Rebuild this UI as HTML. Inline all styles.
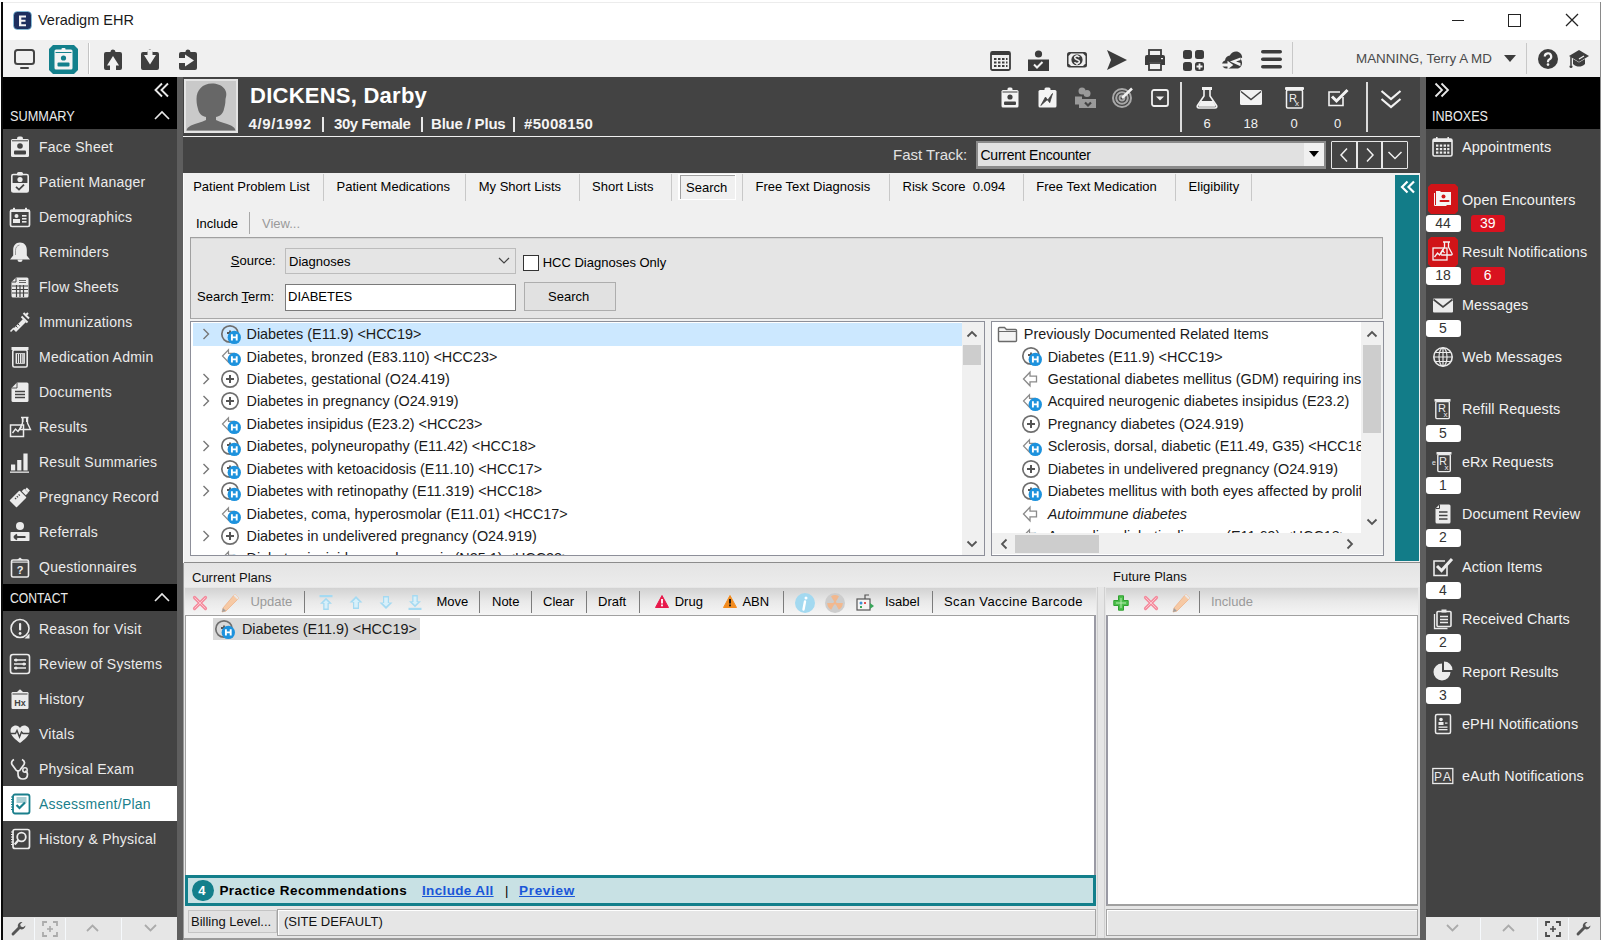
<!DOCTYPE html>
<html><head><meta charset="utf-8">
<style>
*{margin:0;padding:0;box-sizing:border-box}
html,body{width:1602px;height:940px;overflow:hidden;background:#fff;font-family:"Liberation Sans",sans-serif;color:#000}
.a{position:absolute}
.t{position:absolute;white-space:nowrap;line-height:1}
svg{position:absolute;overflow:visible}
/* sidebar */
.si{position:absolute;left:39px;font-size:14px;letter-spacing:0.25px;margin-top:-0.8px;color:#f2f2f2;white-space:nowrap;line-height:1}
.ri{position:absolute;left:1462px;font-size:14px;color:#f2f2f2;white-space:nowrap;line-height:1}
.bd{position:absolute;height:17px;background:#fff;border-radius:3px;color:#333;font-size:13px;text-align:center;line-height:17px}
.bdr{position:absolute;height:17px;background:#d9121f;border-radius:3px;color:#fff;font-size:13px;text-align:center;line-height:17px}
.tab{position:absolute;top:179px;font-size:13px;color:#000;white-space:nowrap;line-height:1}
.tsep{position:absolute;top:174px;width:1px;height:27px;background:#c8c8c8}
.row{position:absolute;font-size:14px;color:#1a1a1a;white-space:nowrap;line-height:1}
.tb{position:absolute;font-size:13px;color:#000;white-space:nowrap;line-height:1}
.tsp{position:absolute;top:590px;width:2px;height:24px;border-left:1px solid #b4b4b4;border-right:1px solid #fafafa}
</style></head><body>
<!-- window frame -->
<div class="a" style="left:0;top:0;width:1602px;height:40px;background:#fff"></div>
<div class="a" style="left:0;top:40px;width:1602px;height:37px;background:#f0f0f0"></div>



<!-- left sidebar -->
<div class="a" style="left:2px;top:77px;width:175px;height:863px;background:#434343"></div>
<div class="a" style="left:2px;top:77px;width:175px;height:52px;background:#000"></div>
<div class="a" style="left:177px;top:77px;width:6px;height:863px;background:#5e5e5e"></div>

<!-- main header -->
<div class="a" style="left:183px;top:77px;width:1237px;height:96px;background:#434343"></div>
<div class="a" style="left:183px;top:136px;width:1237px;height:1px;background:#f0f0f0"></div>
<!-- main content bg -->
<div class="a" style="left:183px;top:173px;width:1237px;height:767px;background:#f0f0f0"></div>

<!-- right gray stripe & sidebar -->
<div class="a" style="left:1420px;top:77px;width:6px;height:863px;background:#5e5e5e"></div>
<div class="a" style="left:1426px;top:77px;width:174px;height:863px;background:#434343"></div>
<div class="a" style="left:1426px;top:77px;width:174px;height:52px;background:#000"></div>


<!-- left sidebar content -->
<svg style="left:154px;top:82px" width="16" height="16" viewBox="0 0 16 16"><path d="M8 1.5L1.5 8 8 14.5M14 1.5L7.5 8 14 14.5" fill="none" stroke="#e8e8e8" stroke-width="1.9"/></svg>
<div class="t" style="left:9.7px;top:108.7px;font-size:14.8px;color:#ebebeb;transform:scaleX(0.86);transform-origin:0 0">SUMMARY</div>
<svg style="left:154px;top:110px" width="16" height="10" viewBox="0 0 16 10"><path d="M1 9L8 2l7 7" fill="none" stroke="#e8e8e8" stroke-width="1.6"/></svg>
<div class="a" style="left:2px;top:584px;width:175px;height:27px;background:#000"></div>
<div class="t" style="left:10px;top:590.7px;font-size:14.5px;color:#ebebeb;transform:scaleX(0.84);transform-origin:0 0">CONTACT</div>
<svg style="left:154px;top:592px" width="16" height="10" viewBox="0 0 16 10"><path d="M1 9L8 2l7 7" fill="none" stroke="#e8e8e8" stroke-width="1.6"/></svg>
<div class="a" style="left:2px;top:786px;width:175px;height:35px;background:#fff"></div>
<!-- bottom toolbar -->
<div class="a" style="left:2px;top:917px;width:175px;height:23px;background:#e6e6e6"></div>
<svg style="left:9px;top:136.4px" width="22" height="22" viewBox="0 0 22 22"><rect x="2" y="3" width="18" height="18" rx="1.5" fill="#ebebeb"/><rect x="8" y="0.5" width="6" height="4" rx="2" fill="#ebebeb"/><rect x="3" y="4.3" width="16" height="1" fill="#434343"/><circle cx="11" cy="10" r="2.8" fill="#434343"/><rect x="5" y="14.5" width="12" height="4" rx="1" fill="#434343"/></svg>
<div class="si" style="top:140.7px;color:#ebebeb">Face Sheet</div>
<svg style="left:9px;top:171.4px" width="22" height="22" viewBox="0 0 22 22"><rect x="2.8" y="3.5" width="16.4" height="17.5" rx="1.5" fill="none" stroke="#ebebeb" stroke-width="1.6"/><rect x="8" y="1" width="6" height="3.5" rx="1.5" fill="#ebebeb"/><circle cx="11" cy="8.5" r="2.6" fill="#ebebeb"/><rect x="2.8" y="12" width="16.4" height="9" fill="#ebebeb"/><path d="M7 15.8l3 2.8 5-5" fill="none" stroke="#434343" stroke-width="1.8"/></svg>
<div class="si" style="top:175.7px;color:#ebebeb">Patient Manager</div>
<svg style="left:9px;top:206.4px" width="22" height="22" viewBox="0 0 22 22"><rect x="1.5" y="4" width="19" height="16.5" rx="1.5" fill="none" stroke="#ebebeb" stroke-width="1.7"/><rect x="4" y="1.8" width="2" height="3" fill="#ebebeb"/><rect x="16" y="1.8" width="2" height="3" fill="#ebebeb"/><rect x="1.5" y="4" width="19" height="2" fill="#ebebeb"/><circle cx="7.5" cy="10" r="2" fill="#ebebeb"/><rect x="4" y="13" width="7" height="4" fill="#ebebeb"/><rect x="13" y="9" width="4.5" height="1.6" fill="#ebebeb"/><rect x="13" y="12" width="4.5" height="1.6" fill="#ebebeb"/><rect x="13" y="15" width="4.5" height="1.6" fill="#ebebeb"/></svg>
<div class="si" style="top:210.7px;color:#ebebeb">Demographics</div>
<svg style="left:9px;top:241.4px" width="22" height="22" viewBox="0 0 22 22"><path d="M11 1.5c-4.5 0-6.8 3.3-6.8 7.5v5.5L1 18.5h20l-3.2-4V9c0-4.2-2.3-7.5-6.8-7.5z" fill="#ebebeb"/><path d="M8.5 18.5a2.5 2.5 0 0 0 5 0z" fill="#ebebeb"/><path d="M6.5 14V9.5c0-3 1.5-5 4-5.5" fill="none" stroke="#434343" stroke-width="0.8" opacity="0.6"/></svg>
<div class="si" style="top:245.7px;color:#ebebeb">Reminders</div>
<svg style="left:9px;top:276.4px" width="22" height="22" viewBox="0 0 22 22"><path d="M7 1.5h11a1.5 1.5 0 0 1 1.5 1.5v17a1.5 1.5 0 0 1-1.5 1.5H4a1.5 1.5 0 0 1-1.5-1.5V6z" fill="#ebebeb"/><path d="M3 10h16M3 13.5h16M3 17h16M7.5 9v12M11 9v12M14.5 9v12" stroke="#434343" stroke-width="1.2"/><path d="M7 1.5V6H2.5" stroke="#434343" stroke-width="1" fill="none"/><path d="M10 4.5h7M10 6.5h7" stroke="#434343" stroke-width="0.8"/></svg>
<div class="si" style="top:280.7px;color:#ebebeb">Flow Sheets</div>
<svg style="left:9px;top:311.4px" width="22" height="22" viewBox="0 0 22 22"><path d="M1.5 20.5l3.5-3.5" stroke="#ebebeb" stroke-width="1.6"/><path d="M4 18l10-10 3 3L7 21z" fill="#ebebeb"/><path d="M12.5 5.5l6 6" stroke="#ebebeb" stroke-width="2"/><path d="M16 5l3-3M14.5 2l5.5 5.5" stroke="#ebebeb" stroke-width="2"/><path d="M7 15l1.5 1.5M9 13l1.5 1.5" stroke="#434343" stroke-width="1"/></svg>
<div class="si" style="top:315.7px;color:#ebebeb">Immunizations</div>
<svg style="left:9px;top:346.4px" width="22" height="22" viewBox="0 0 22 22"><rect x="2.5" y="1" width="17" height="3" fill="#ebebeb"/><rect x="3.8" y="4" width="14.4" height="17" rx="1.5" fill="none" stroke="#ebebeb" stroke-width="1.6"/><path d="M7.5 8v9M9.5 8v9M11.5 8v9M13.2 8v9M14.8 8v9" stroke="#ebebeb" stroke-width="1.1"/><rect x="7" y="7.5" width="8.5" height="10" fill="none" stroke="#ebebeb" stroke-width="0.8"/></svg>
<div class="si" style="top:350.7px;color:#ebebeb">Medication Admin</div>
<svg style="left:9px;top:381.4px" width="22" height="22" viewBox="0 0 22 22"><path d="M8 1.5h10a1.5 1.5 0 0 1 1.5 1.5v16.5A1.5 1.5 0 0 1 18 21H4a1.5 1.5 0 0 1-1.5-1.5V7z" fill="#ebebeb"/><path d="M6 10.5h10M6 13.5h10M6 16.5h10" stroke="#434343" stroke-width="1.4"/><path d="M8 1.5V7H2.5" fill="none" stroke="#434343" stroke-width="0.9"/></svg>
<div class="si" style="top:385.7px;color:#ebebeb">Documents</div>
<svg style="left:9px;top:416.4px" width="22" height="22" viewBox="0 0 22 22"><rect x="1.5" y="9" width="13" height="11.5" fill="none" stroke="#ebebeb" stroke-width="1.5"/><path d="M3.5 17l3-4 2.5 2.5 3.5-5" fill="none" stroke="#ebebeb" stroke-width="1.4"/><path d="M12 1.5h7.5M13.5 1.5v5.5L10.5 13.5h11L18.5 7V1.5" fill="none" stroke="#ebebeb" stroke-width="1.4"/><path d="M14 2v4M17.5 2v4" stroke="#ebebeb" stroke-width="1"/></svg>
<div class="si" style="top:420.7px;color:#ebebeb">Results</div>
<svg style="left:9px;top:451.4px" width="22" height="22" viewBox="0 0 22 22"><rect x="2" y="13.5" width="4.2" height="6" fill="#ebebeb"/><rect x="8.2" y="9" width="4.2" height="10.5" fill="#ebebeb"/><rect x="14.4" y="2.5" width="4.2" height="17" fill="#ebebeb"/><rect x="1" y="20.5" width="19" height="1.3" fill="#ebebeb"/></svg>
<div class="si" style="top:455.7px;color:#ebebeb">Result Summaries</div>
<svg style="left:9px;top:486.4px" width="22" height="22" viewBox="0 0 22 22"><path d="M1.5 14.5l9-9 6 6-9 9z" fill="#ebebeb" stroke="#ebebeb" stroke-width="1.5" stroke-linejoin="round"/><path d="M14 4l4 4" stroke="#ebebeb" stroke-width="3.5"/><path d="M17 2.5l3 3" stroke="#ebebeb" stroke-width="2.5"/><path d="M6 12l1.2 1.2M7.8 10.2l1.2 1.2M9.6 8.4l1.2 1.2" stroke="#434343" stroke-width="1.2"/></svg>
<div class="si" style="top:490.7px;color:#ebebeb">Pregnancy Record</div>
<svg style="left:9px;top:521.4px" width="22" height="22" viewBox="0 0 22 22"><circle cx="11" cy="5" r="4" fill="#ebebeb"/><rect x="1.5" y="11" width="19" height="9" rx="0.8" fill="#ebebeb"/><path d="M5 16h11.5M5 16l3-2.5M5 16l3 2.5" stroke="#434343" stroke-width="1.8" fill="none"/></svg>
<div class="si" style="top:525.7px;color:#ebebeb">Referrals</div>
<svg style="left:9px;top:556.4px" width="22" height="22" viewBox="0 0 22 22"><rect x="2.5" y="4" width="17" height="17" rx="1.5" fill="none" stroke="#ebebeb" stroke-width="1.6"/><path d="M8 4l3-2.5L14 4z" fill="#ebebeb"/><rect x="2.5" y="5.5" width="17" height="1.2" fill="#ebebeb"/><text x="11" y="18" font-size="11" font-weight="bold" text-anchor="middle" fill="#ebebeb" font-family="Liberation Sans">?</text></svg>
<div class="si" style="top:560.7px;color:#ebebeb">Questionnaires</div>
<svg style="left:9px;top:618.0px" width="22" height="22" viewBox="0 0 22 22"><circle cx="11" cy="10.5" r="9" fill="none" stroke="#ebebeb" stroke-width="1.6"/><rect x="10" y="5" width="2.2" height="7.5" rx="1" fill="#ebebeb"/><circle cx="11.1" cy="15.5" r="1.4" fill="#ebebeb"/><path d="M15.5 20.5h5v-5z" fill="#ebebeb"/></svg>
<div class="si" style="top:622.3px;color:#ebebeb">Reason for Visit</div>
<svg style="left:9px;top:653.0px" width="22" height="22" viewBox="0 0 22 22"><rect x="1.5" y="1.5" width="19" height="19" rx="2.5" fill="none" stroke="#ebebeb" stroke-width="1.6"/><path d="M5 7h12M5 11h12M5 15h12" stroke="#ebebeb" stroke-width="1.4"/><circle cx="7" cy="7" r="1.6" fill="#ebebeb"/><circle cx="15" cy="11" r="1.6" fill="#ebebeb"/><circle cx="7" cy="15" r="1.6" fill="#ebebeb"/></svg>
<div class="si" style="top:657.3px;color:#ebebeb">Review of Systems</div>
<svg style="left:9px;top:688.0px" width="22" height="22" viewBox="0 0 22 22"><rect x="2.5" y="4" width="17" height="17" rx="1.2" fill="#ebebeb"/><path d="M8 4l3-2.8L14 4z" fill="#ebebeb"/><rect x="3.5" y="5.5" width="15" height="1" fill="#434343"/><text x="11" y="17.5" font-size="9" font-weight="bold" text-anchor="middle" fill="#434343" font-family="Liberation Sans">Hx</text></svg>
<div class="si" style="top:692.3px;color:#ebebeb">History</div>
<svg style="left:9px;top:723.0px" width="22" height="22" viewBox="0 0 22 22"><path d="M11 20C6.5 16.5 1.5 13 1.5 8 1.5 4.8 3.8 2.5 6.8 2.5c2 0 3.3 1 4.2 2.5.9-1.5 2.2-2.5 4.2-2.5 3 0 5.3 2.3 5.3 5.5 0 5-5 8.5-9.5 12z" fill="#ebebeb"/><path d="M1 10.5h5.5l1.5-3 2.5 6.5 2-5 1.5 1.5H21" stroke="#434343" stroke-width="1.4" fill="none"/></svg>
<div class="si" style="top:727.3px;color:#ebebeb">Vitals</div>
<svg style="left:9px;top:758.0px" width="22" height="22" viewBox="0 0 22 22"><path d="M5 1.5c-2 1-3 3-2 5l4 5.5c1 1.2 3 1.2 4 0l4-5.5c1-2 0-4-2-5" fill="none" stroke="#ebebeb" stroke-width="1.7"/><path d="M9 12.5v3.5c0 3 2 5 5 5s4.5-2 4.5-4.5c0-2-1-3-2.5-3.5" fill="none" stroke="#ebebeb" stroke-width="1.7"/><circle cx="16" cy="12" r="2.2" fill="none" stroke="#ebebeb" stroke-width="1.5"/></svg>
<div class="si" style="top:762.3px;color:#ebebeb">Physical Exam</div>
<svg style="left:9px;top:793.0px" width="22" height="22" viewBox="0 0 22 22"><rect x="4" y="1.5" width="16.5" height="19" rx="2" fill="none" stroke="#1a7f8c" stroke-width="1.8"/><path d="M7.5 5h10M7.5 7h10M7.5 9h10" stroke="#1a7f8c" stroke-width="1.2" opacity="0.75"/><path d="M7.5 12l3 3 5.5-5.5" fill="none" stroke="#1a7f8c" stroke-width="2.2"/><path d="M2 4h2.5M2 6.5h2.5M2 9h2.5M2 11.5h2.5M2 14h2.5M2 16.5h2.5" stroke="#1a7f8c" stroke-width="1"/></svg>
<div class="si" style="top:797.3px;color:#1a7f8c">Assessment/Plan</div>
<svg style="left:9px;top:828.0px" width="22" height="22" viewBox="0 0 22 22"><rect x="4" y="1.5" width="16.5" height="19" rx="2" fill="none" stroke="#ebebeb" stroke-width="1.7"/><circle cx="12.5" cy="9" r="4.3" fill="none" stroke="#ebebeb" stroke-width="1.8"/><path d="M9.5 12l-3.8 4.5" stroke="#ebebeb" stroke-width="2.2"/><path d="M2 4h2.5M2 6.5h2.5M2 9h2.5M2 11.5h2.5M2 14h2.5M2 16.5h2.5" stroke="#ebebeb" stroke-width="1"/></svg>
<div class="si" style="top:832.3px;color:#ebebeb">History &amp; Physical</div>

<!-- title bar -->
<svg style="left:13px;top:11px" width="19" height="19" viewBox="0 0 19 19"><rect x="0.5" y="0.5" width="18" height="18" rx="4" fill="#1d2f5e" stroke="#7fd3f0" stroke-width="0.6"/><path d="M6 4.5h7v2H8.3v2.3h4.2v2H8.3v2.4H13v2H6z" fill="#f4f4f4"/></svg>
<div class="t" style="left:38px;top:13px;font-size:14.5px;color:#1a1a1a">Veradigm EHR</div>
<div class="a" style="left:1452px;top:20px;width:12px;height:1px;background:#222"></div>
<div class="a" style="left:1508px;top:14px;width:13px;height:13px;border:1.3px solid #222"></div>
<svg style="left:1565px;top:13px" width="14" height="14" viewBox="0 0 14 14"><path d="M1 1l12 12M13 1L1 13" stroke="#222" stroke-width="1.3"/></svg>
<!-- toolbar -->
<svg style="left:14px;top:49px" width="21" height="22" viewBox="0 0 21 22"><rect x="1" y="1" width="19" height="14" rx="2.5" fill="none" stroke="#444" stroke-width="2"/><rect x="6" y="18" width="9" height="2" rx="1" fill="#444"/></svg>
<svg style="left:49px;top:45px" width="29" height="29" viewBox="0 0 29 29"><path d="M4 0h21l4 4v21l-4 4H4l-4-4V4z" fill="#13808c"/><rect x="5.5" y="4.5" width="18" height="20" rx="1.5" fill="#f4f4f4"/><rect x="12.5" y="3" width="4" height="3" rx="1" fill="#f4f4f4"/><rect x="6.5" y="7" width="16" height="1" fill="#13808c"/><circle cx="14.5" cy="13" r="2.6" fill="#13808c"/><rect x="8.5" y="17.5" width="12" height="4" rx="1" fill="#13808c"/></svg>
<div class="a" style="left:88px;top:43px;width:1px;height:31px;background:#c4c4c4"></div>
<div class="a" style="left:89px;top:43px;width:1px;height:31px;background:#fff"></div>
<svg style="left:104px;top:49px" width="18" height="22" viewBox="0 0 18 22"><path d="M2 3h4.5a2.5 2.5 0 0 1 5 0H16a2 2 0 0 1 2 2v14a2 2 0 0 1-2 2H2a2 2 0 0 1-2-2V5a2 2 0 0 1 2-2z" fill="#3f3f3f"/><path d="M9 7l-6 9.5h3V21h6v-4.5h3z" fill="#f2f2f2"/></svg>
<svg style="left:141px;top:49px" width="18" height="22" viewBox="0 0 18 22"><path d="M2 3h4.5a2.5 2.5 0 0 1 5 0H16a2 2 0 0 1 2 2v14a2 2 0 0 1-2 2H2a2 2 0 0 1-2-2V5a2 2 0 0 1 2-2z" fill="#3f3f3f"/><path d="M6.5 1v5H3l6 9.5 6-9.5h-3.5V1z" fill="#f2f2f2"/></svg>
<svg style="left:179px;top:49px" width="18" height="22" viewBox="0 0 18 22"><path d="M2 3h4.5a2.5 2.5 0 0 1 5 0H16a2 2 0 0 1 2 2v14a2 2 0 0 1-2 2H2a2 2 0 0 1-2-2V5a2 2 0 0 1 2-2z" fill="#3f3f3f"/><path d="M0 9h6V5.5l9 6-9 6V14H0z" fill="#f2f2f2"/></svg>
<!-- toolbar right icons -->
<svg style="left:990px;top:50px" width="21" height="21" viewBox="0 0 21 21"><rect x="1" y="2" width="19" height="18" rx="1.5" fill="none" stroke="#3c3c3c" stroke-width="1.8"/><rect x="1" y="2" width="19" height="3" fill="#3c3c3c"/><g fill="#3c3c3c"><rect x="4" y="8" width="2.5" height="2"/><rect x="8" y="8" width="2.5" height="2"/><rect x="12" y="8" width="2.5" height="2"/><rect x="16" y="8" width="1.5" height="2"/><rect x="4" y="11.5" width="2.5" height="2"/><rect x="8" y="11.5" width="2.5" height="2"/><rect x="12" y="11.5" width="2.5" height="2"/><rect x="16" y="11.5" width="1.5" height="2"/><rect x="4" y="15" width="2.5" height="2"/><rect x="8" y="15" width="2.5" height="2"/><rect x="12" y="15" width="2.5" height="2"/><rect x="16" y="15" width="1.5" height="2"/></g></svg>
<svg style="left:1028px;top:50px" width="21" height="21" viewBox="0 0 21 21"><circle cx="10.5" cy="4" r="3.6" fill="#3c3c3c"/><rect x="0" y="9.5" width="21" height="11.5" fill="#3c3c3c"/><path d="M6 14.5l3 3 5.5-5.5" fill="none" stroke="#f2f2f2" stroke-width="2"/></svg>
<svg style="left:1067px;top:52px" width="20" height="16" viewBox="0 0 20 16"><rect x="0" y="0" width="20" height="15.5" rx="2.5" fill="#3c3c3c"/><path d="M4 1.5h12l2.5 2.5v7.5L16 14H4l-2.5-2.5V4z" fill="#f0f0f0"/><circle cx="10" cy="7.75" r="5.6" fill="#3c3c3c"/><path d="M12.3 5.2c-.5-.8-1.3-1.2-2.3-1.2-1.4 0-2.3.7-2.3 1.8 0 2.4 4.7 1.4 4.7 3.8 0 1.1-1 1.9-2.4 1.9-1.1 0-2-.5-2.5-1.3M10 2.8v1.3M10 11.5v1.4" fill="none" stroke="#f0f0f0" stroke-width="1.5"/></svg>
<svg style="left:1107px;top:50px" width="20" height="20" viewBox="0 0 20 20"><path d="M0 0l20 10L0 20l4-10z" fill="#3c3c3c"/></svg>
<svg style="left:1145px;top:50px" width="20" height="21" viewBox="0 0 20 21"><rect x="4" y="0" width="12" height="6" fill="none" stroke="#3c3c3c" stroke-width="1.8"/><path d="M2 5h16a2 2 0 0 1 2 2v8h-4v-3H4v3H0V7a2 2 0 0 1 2-2z" fill="#3c3c3c"/><rect x="4" y="13" width="12" height="7" fill="none" stroke="#3c3c3c" stroke-width="1.8"/><rect x="16" y="8" width="2" height="1.2" fill="#f2f2f2"/></svg>
<svg style="left:1183px;top:50px" width="21" height="21" viewBox="0 0 21 21"><rect x="0" y="0" width="9" height="9" rx="2.5" fill="#3c3c3c"/><rect x="12" y="0" width="9" height="9" rx="2.5" fill="#3c3c3c"/><rect x="0" y="12" width="9" height="9" rx="2.5" fill="#3c3c3c"/><rect x="12" y="12" width="9" height="9" rx="2.5" fill="#3c3c3c"/><path d="M16.5 13.5v6M13.5 16.5h6" stroke="#f2f2f2" stroke-width="1.8"/></svg>
<svg style="left:1222px;top:51px" width="21" height="19" viewBox="0 0 21 19"><path d="M4.5 17.5C2 17.5 0 15.8 0 13.5c0-2 1.3-3.4 3-3.9C3.3 6.8 5.3 4.8 7.8 4.6 9.2 2 11.5.5 14 .5c3.3 0 6 2.6 6.2 5.8-.1.5-.3.8-.8.8-.3 0-.6-.2-.7-.6C18 7.6 19.8 9 20 11.5c.3 3.3-2 6-5 6z" fill="#3c3c3c"/><path d="M0 12.5h5.5v-2.7l5.8 4.3-5.8 4.3v-2.9H0z" fill="#f2f2f2"/><path d="M18.5 6.5L8 10.5l10.5 4.8v-3.2L14 10.5l4.5-1.6z" fill="#f2f2f2"/></svg>
<svg style="left:1261px;top:50px" width="21" height="19" viewBox="0 0 21 19"><rect x="0" y="0" width="21" height="3.6" rx="1.8" fill="#3c3c3c"/><rect x="0" y="7.5" width="21" height="3.6" rx="1.8" fill="#3c3c3c"/><rect x="0" y="15" width="21" height="3.6" rx="1.8" fill="#3c3c3c"/></svg>
<div class="a" style="left:1292px;top:42px;width:1px;height:32px;background:#c8c8c8"></div>
<div class="t" style="left:1356px;top:52px;font-size:13.4px;color:#4a4a4a">MANNING, Terry A MD</div>
<svg style="left:1504px;top:55px" width="12" height="7" viewBox="0 0 12 7"><path d="M0 0h12L6 7z" fill="#3c3c3c"/></svg>
<div class="a" style="left:1526px;top:43px;width:1px;height:31px;background:#c8c8c8"></div>
<svg style="left:1538px;top:49px" width="20" height="20" viewBox="0 0 20 20"><circle cx="10" cy="10" r="10" fill="#3c3c3c"/><path d="M6.8 7.5a3.2 3.2 0 1 1 4.5 2.9c-.9.5-1.3 1-1.3 2v.8" fill="none" stroke="#f2f2f2" stroke-width="2.2"/><circle cx="10" cy="15.6" r="1.3" fill="#f2f2f2"/></svg>
<svg style="left:1569px;top:49px" width="20" height="20" viewBox="0 0 20 20"><path d="M10 1l10 6-10 6L0 7z" fill="#3c3c3c"/><path d="M4 10v5c2 2 4 2.5 6 2.5s4-.5 6-2.5v-5l-6 3.5z" fill="#3c3c3c"/><path d="M2 8v8" stroke="#3c3c3c" stroke-width="1.5"/><circle cx="2" cy="17.5" r="1.5" fill="#3c3c3c"/><path d="M10 10l5-3" stroke="#f2f2f2" stroke-width="1.2"/></svg>

<!-- patient header -->
<div class="a" style="left:184px;top:79px;width:54px;height:54px;background:#e4e4e4"></div>
<svg style="left:186px;top:81px" width="50" height="50" viewBox="0 0 50 50"><rect width="50" height="50" fill="#c9c9c9"/><path d="M26 2.5C16.5 2.5 10.5 9 10.5 18c0 5 1 8 1.5 10 .5 3 2 5 4 6.5 1.5 1 3 1 4 1.5v3c-4 2-10 3.5-15 5.5-3 1.5-4 3-4.5 5h49c-.5-2-1.5-3.5-4.5-5-5-2-11-3.5-15-5.5v-3c1-.5 2.5-.5 4-1.5 2-1.5 3.5-3.5 4-6.5.5-2 1.5-5 1.5-10C43 9 36 2.5 26 2.5z" fill="#676767"/></svg>
<div class="t" style="left:250px;top:84.5px;font-size:22px;font-weight:bold;color:#fff;letter-spacing:0.25px">DICKENS, Darby</div>
<div class="t" style="left:248.5px;top:115.5px;font-size:15px;font-weight:bold;color:#f4f4f4;letter-spacing:0.6px">4/9/1992</div>
<div class="a" style="left:322px;top:117px;width:1.5px;height:15px;background:#e8e8e8"></div>
<div class="t" style="left:334px;top:115.5px;font-size:15px;font-weight:bold;color:#f4f4f4;letter-spacing:-0.45px">30y Female</div>
<div class="a" style="left:421px;top:117px;width:1.5px;height:15px;background:#e8e8e8"></div>
<div class="t" style="left:431px;top:115.5px;font-size:15px;font-weight:bold;color:#f4f4f4;letter-spacing:-0.2px">Blue / Plus</div>
<div class="a" style="left:513px;top:117px;width:1.5px;height:15px;background:#e8e8e8"></div>
<div class="t" style="left:524px;top:115.5px;font-size:15px;font-weight:bold;color:#f4f4f4;letter-spacing:0.3px">#5008150</div>
<!-- header icons -->
<svg style="left:1001px;top:87px" width="18" height="21" viewBox="0 0 18 21"><rect x="0.5" y="3" width="17" height="17.5" rx="1.5" fill="#f4f4f4"/><rect x="6.5" y="0.5" width="5" height="4" rx="1.5" fill="#f4f4f4"/><rect x="1.5" y="4.5" width="15" height="1" fill="#434343"/><circle cx="9" cy="10" r="2.6" fill="#434343"/><rect x="3" y="14.5" width="12" height="3.5" rx="1" fill="#434343"/></svg>
<svg style="left:1038px;top:87px" width="19" height="21" viewBox="0 0 19 21"><rect x="0.5" y="3" width="18" height="17.5" rx="1.5" fill="#f4f4f4"/><rect x="6.5" y="0.5" width="6" height="4" rx="1.5" fill="#f4f4f4"/><path d="M2.8 18.5L7.5 10l2.2 3.2L14.5 6.5l-2.8 9.2-2.3-3.2z" fill="#434343" stroke="#434343" stroke-width="0.8" stroke-linejoin="round"/></svg>
<svg style="left:1075px;top:87px" width="21" height="21" viewBox="0 0 21 21"><circle cx="7" cy="4" r="3.5" fill="#9a9a9a"/><circle cx="12" cy="6.5" r="3.5" fill="#9a9a9a"/><rect x="0" y="9.5" width="7" height="8" fill="#9a9a9a"/><rect x="4" y="12" width="17" height="9" fill="#9a9a9a"/><path d="M10 15.5l3 3 3-3" stroke="#434343" stroke-width="2.2" fill="none"/></svg>
<svg style="left:1112px;top:87px" width="22" height="21" viewBox="0 0 22 21"><circle cx="10" cy="11" r="9" fill="none" stroke="#a8a8a8" stroke-width="2"/><circle cx="10" cy="11" r="5.8" fill="none" stroke="#a8a8a8" stroke-width="2"/><circle cx="10" cy="11" r="2.5" fill="none" stroke="#a8a8a8" stroke-width="1.8"/><path d="M10 11L20 1.5" stroke="#f0f0f0" stroke-width="2.6"/></svg>
<svg style="left:1151px;top:89px" width="18" height="18" viewBox="0 0 18 18"><rect x="1" y="1" width="16" height="16" rx="2" fill="none" stroke="#f0f0f0" stroke-width="1.8"/><path d="M5 7.5h8L9 11.5z" fill="#f0f0f0"/></svg>
<div class="a" style="left:1180px;top:82px;width:2px;height:50px;background:#dcdcdc"></div>
<svg style="left:1196px;top:87px" width="22" height="22" viewBox="0 0 22 22"><rect x="6" y="0" width="10" height="3" fill="#f2f2f2"/><path d="M8 3v6L1.5 18.5c-.8 1.3 0 2.5 1.5 2.5h16c1.5 0 2.3-1.2 1.5-2.5L14 9V3" fill="none" stroke="#f2f2f2" stroke-width="1.6"/><path d="M5 14h12l2.5 4.5c.3.8 0 1.3-.8 1.3H3.3c-.8 0-1.1-.5-.8-1.3z" fill="#f2f2f2"/></svg>
<svg style="left:1240px;top:90px" width="22" height="15" viewBox="0 0 22 15"><rect x="0" y="0" width="22" height="15" rx="1.5" fill="#f2f2f2"/><path d="M1 1.5l10 8 10-8" stroke="#434343" stroke-width="1.5" fill="none"/></svg>
<svg style="left:1285px;top:87px" width="19" height="22" viewBox="0 0 19 22"><rect x="0" y="0" width="19" height="3" rx="1" fill="#f2f2f2"/><rect x="1.5" y="3" width="16" height="18" rx="1.2" fill="none" stroke="#f2f2f2" stroke-width="1.5"/><text x="4" y="15" font-size="11" font-family="Liberation Sans" fill="#f2f2f2">R</text><text x="10" y="19" font-size="8" font-family="Liberation Sans" fill="#f2f2f2">x</text></svg>
<svg style="left:1328px;top:88px" width="21" height="19" viewBox="0 0 21 19"><path d="M15 9v8.5H1V4h11" fill="none" stroke="#f2f2f2" stroke-width="1.6"/><path d="M4 8.5l4.5 4.5L19.5 2" stroke="#f2f2f2" stroke-width="3" fill="none"/></svg>
<div class="t" style="left:1203.5px;top:117px;font-size:13px;color:#f2f2f2">6</div>
<div class="t" style="left:1243.5px;top:117px;font-size:13px;color:#f2f2f2">18</div>
<div class="t" style="left:1290.5px;top:117px;font-size:13px;color:#f2f2f2">0</div>
<div class="t" style="left:1334px;top:117px;font-size:13px;color:#f2f2f2">0</div>
<div class="a" style="left:1366px;top:82px;width:2px;height:50px;background:#dcdcdc"></div>
<svg style="left:1380px;top:89px" width="22" height="21" viewBox="0 0 22 21"><path d="M1.5 2l9.5 8 9.5-8M1.5 10l9.5 8 9.5-8" stroke="#f2f2f2" stroke-width="2.2" fill="none"/></svg>
<!-- fast track -->
<div class="t" style="left:893px;top:147.3px;font-size:15px;color:#e2e2e2">Fast Track:</div>
<div class="a" style="left:976px;top:141px;width:350px;height:28px;background:#8a8a8a"></div>
<div class="a" style="left:978px;top:143px;width:326px;height:23px;background:#e1e1e1"></div>
<div class="a" style="left:1304px;top:143px;width:20px;height:23px;background:#f0f0f0"></div>
<svg style="left:1309px;top:151px" width="10" height="6" viewBox="0 0 10 6"><path d="M0 0h10L5 6z" fill="#000"/></svg>
<div class="t" style="left:980.5px;top:148px;font-size:14px;color:#000;letter-spacing:-0.25px">Current Encounter</div>
<div class="a" style="left:1331px;top:141px;width:77px;height:28px;border:1.5px solid #e6e6e6;border-radius:1px"></div>
<div class="a" style="left:1356px;top:141px;width:2px;height:28px;background:#e6e6e6"></div>
<div class="a" style="left:1381px;top:141px;width:2px;height:28px;background:#e6e6e6"></div>
<svg style="left:1339px;top:147px" width="10" height="16" viewBox="0 0 10 16"><path d="M8 1.5L2 8l6 6.5" stroke="#f0f0f0" stroke-width="1.5" fill="none"/></svg>
<svg style="left:1365px;top:147px" width="10" height="16" viewBox="0 0 10 16"><path d="M2 1.5L8 8l-6 6.5" stroke="#f0f0f0" stroke-width="1.5" fill="none"/></svg>
<svg style="left:1387px;top:150px" width="16" height="10" viewBox="0 0 16 10"><path d="M1.5 2l6.5 6.5L14.5 2" stroke="#f0f0f0" stroke-width="1.5" fill="none"/></svg>

<!-- tabs -->
<div class="a" style="left:183px;top:173px;width:1px;height:767px;background:#fafafa"></div>
<div class="tab" style="left:193.2px;top:180px">Patient Problem List</div>
<div class="tab" style="left:336.5px;top:180px">Patient Medications</div>
<div class="tab" style="left:478.7px;top:180px">My Short Lists</div>
<div class="tab" style="left:592.0px;top:180px">Short Lists</div>
<div class="tab" style="left:686.0px;top:180px">Search</div>
<div class="tab" style="left:755.5px;top:180px">Free Text Diagnosis</div>
<div class="tab" style="left:902.6px;top:180px">Risk Score&nbsp; 0.094</div>
<div class="tab" style="left:1036.3px;top:180px">Free Text Medication</div>
<div class="tab" style="left:1188.6px;top:180px">Eligibility</div>
<div class="tsep" style="left:323px"></div>
<div class="tsep" style="left:465px"></div>
<div class="tsep" style="left:579px"></div>
<div class="tsep" style="left:671px"></div>
<div class="tsep" style="left:742px"></div>
<div class="tsep" style="left:889px"></div>
<div class="tsep" style="left:1023px"></div>
<div class="tsep" style="left:1175px"></div>
<div class="tsep" style="left:1251px"></div>
<div class="a" style="left:678px;top:174px;width:58px;height:26px;border:1px solid #fff;border-left:2px solid #fff;box-shadow:inset 1px 1px 0 #a0a0a0;background:#f0f0f0"></div>
<div class="tab" style="left:686px;top:180.5px">Search</div>
<div class="t" style="left:196px;top:217.2px;font-size:13px;color:#000">Include</div>
<div class="a" style="left:249px;top:212px;width:1px;height:22px;background:#a8a8a8"></div>
<div class="t" style="left:262px;top:217.2px;font-size:13px;color:#9a9a9a">View...</div>
<div class="a" style="left:190px;top:237px;width:1193px;height:82px;background:#e5e5e5;border:1px solid #a0a0a0;border-bottom-color:#a8a8a8"></div>
<div class="a" style="left:191px;top:238px;width:1191px;height:1px;background:#d6d6d6"></div>
<div class="t" style="left:230.8px;top:254.2px;font-size:13px;color:#000"><u>S</u>ource:</div>
<div class="a" style="left:285px;top:247.5px;width:231px;height:26px;background:#e5e5e5;border:1px solid #bcbcbc"></div>
<div class="t" style="left:289px;top:254.5px;font-size:13px;color:#000">Diagnoses</div>
<svg style="left:498px;top:257px" width="12" height="7" viewBox="0 0 12 7"><path d="M1 1l5 5 5-5" stroke="#444" stroke-width="1.2" fill="none"/></svg>
<div class="a" style="left:523px;top:254.5px;width:16px;height:16px;background:#fff;border:1.5px solid #333"></div>
<div class="t" style="left:542.7px;top:255.6px;font-size:13px;color:#000">HCC Diagnoses Only</div>
<div class="t" style="left:197px;top:289.5px;font-size:13px;color:#000">Search <u>T</u>erm:</div>
<div class="a" style="left:285px;top:283.5px;width:231px;height:27px;background:#fff;border:1px solid #7a7a7a"></div>
<div class="t" style="left:288px;top:289.5px;font-size:13px;color:#000">DIABETES</div>
<div class="a" style="left:524px;top:282px;width:92px;height:29px;background:#e1e1e1;border:1px solid #adadad"></div>
<div class="t" style="left:548px;top:289.7px;font-size:13px;color:#000">Search</div>
<div class="a" style="left:1395px;top:175px;width:24px;height:386px;background:#127c88"></div>
<svg style="left:1400px;top:180px" width="16" height="14" viewBox="0 0 16 14"><path d="M7.5 1.5L2 7l5.5 5.5M14 1.5L8.5 7l5.5 5.5" stroke="#fff" stroke-width="2.2" fill="none"/></svg>

<!-- results left -->
<div class="a" style="left:190px;top:321px;width:795px;height:235px;background:#fff;border:1px solid #8d8f99;overflow:hidden">
<div class="a" style="left:1.8px;top:1.2px;width:769px;height:22.5px;background:#cce8ff"></div>
<svg style="left:11px;top:6.0px" width="9" height="12" viewBox="0 0 9 12"><path d="M1.5 1l5 5-5 5" stroke="#777" stroke-width="1.4" fill="none"/></svg>
<svg style="left:29.0px;top:2.0px" width="22" height="22" viewBox="0 0 22 22"><circle cx="10" cy="10" r="8.2" stroke="#6f6f6f" stroke-width="1.7" fill="none"/><path d="M10 6.5v5M7 9h5" stroke="#555" stroke-width="1.8"/><circle cx="14.3" cy="13.4" r="6.7" fill="#1d92dd"/><path d="M11.9 10.3v6.2M16.7 10.3v6.2M11.9 13.4h4.8" stroke="#fff" stroke-width="1.9"/></svg>
<div class="row" style="left:55.5px;top:5.0px;font-size:14.4px">Diabetes (E11.9) &lt;HCC19&gt;</div>
<svg style="left:29.0px;top:24.4px" width="22" height="22" viewBox="0 0 22 22"><path d="M2.5 10l6-6.2v3.6h5.5v5.2H8.5v3.6z" stroke="#8a8a8a" stroke-width="1.2" fill="#fff"/><circle cx="14.3" cy="13.4" r="6.7" fill="#1d92dd"/><path d="M11.9 10.3v6.2M16.7 10.3v6.2M11.9 13.4h4.8" stroke="#fff" stroke-width="1.9"/></svg>
<div class="row" style="left:55.5px;top:27.5px;font-size:14.4px">Diabetes, bronzed (E83.110) &lt;HCC23&gt;</div>
<svg style="left:11px;top:50.9px" width="9" height="12" viewBox="0 0 9 12"><path d="M1.5 1l5 5-5 5" stroke="#777" stroke-width="1.4" fill="none"/></svg>
<svg style="left:29.0px;top:46.9px" width="22" height="22" viewBox="0 0 22 22"><circle cx="10" cy="10" r="8.2" stroke="#6f6f6f" stroke-width="1.7" fill="none"/><path d="M10 6v8M6 10h8" stroke="#555" stroke-width="2"/></svg>
<div class="row" style="left:55.5px;top:49.9px;font-size:14.4px">Diabetes, gestational (O24.419)</div>
<svg style="left:11px;top:73.3px" width="9" height="12" viewBox="0 0 9 12"><path d="M1.5 1l5 5-5 5" stroke="#777" stroke-width="1.4" fill="none"/></svg>
<svg style="left:29.0px;top:69.3px" width="22" height="22" viewBox="0 0 22 22"><circle cx="10" cy="10" r="8.2" stroke="#6f6f6f" stroke-width="1.7" fill="none"/><path d="M10 6v8M6 10h8" stroke="#555" stroke-width="2"/></svg>
<div class="row" style="left:55.5px;top:72.3px;font-size:14.4px">Diabetes in pregnancy (O24.919)</div>
<svg style="left:29.0px;top:91.8px" width="22" height="22" viewBox="0 0 22 22"><path d="M2.5 10l6-6.2v3.6h5.5v5.2H8.5v3.6z" stroke="#8a8a8a" stroke-width="1.2" fill="#fff"/><circle cx="14.3" cy="13.4" r="6.7" fill="#1d92dd"/><path d="M11.9 10.3v6.2M16.7 10.3v6.2M11.9 13.4h4.8" stroke="#fff" stroke-width="1.9"/></svg>
<div class="row" style="left:55.5px;top:94.8px;font-size:14.4px">Diabetes insipidus (E23.2) &lt;HCC23&gt;</div>
<svg style="left:11px;top:118.2px" width="9" height="12" viewBox="0 0 9 12"><path d="M1.5 1l5 5-5 5" stroke="#777" stroke-width="1.4" fill="none"/></svg>
<svg style="left:29.0px;top:114.2px" width="22" height="22" viewBox="0 0 22 22"><circle cx="10" cy="10" r="8.2" stroke="#6f6f6f" stroke-width="1.7" fill="none"/><path d="M10 6.5v5M7 9h5" stroke="#555" stroke-width="1.8"/><circle cx="14.3" cy="13.4" r="6.7" fill="#1d92dd"/><path d="M11.9 10.3v6.2M16.7 10.3v6.2M11.9 13.4h4.8" stroke="#fff" stroke-width="1.9"/></svg>
<div class="row" style="left:55.5px;top:117.2px;font-size:14.4px">Diabetes, polyneuropathy (E11.42) &lt;HCC18&gt;</div>
<svg style="left:11px;top:140.6px" width="9" height="12" viewBox="0 0 9 12"><path d="M1.5 1l5 5-5 5" stroke="#777" stroke-width="1.4" fill="none"/></svg>
<svg style="left:29.0px;top:136.6px" width="22" height="22" viewBox="0 0 22 22"><circle cx="10" cy="10" r="8.2" stroke="#6f6f6f" stroke-width="1.7" fill="none"/><path d="M10 6.5v5M7 9h5" stroke="#555" stroke-width="1.8"/><circle cx="14.3" cy="13.4" r="6.7" fill="#1d92dd"/><path d="M11.9 10.3v6.2M16.7 10.3v6.2M11.9 13.4h4.8" stroke="#fff" stroke-width="1.9"/></svg>
<div class="row" style="left:55.5px;top:139.7px;font-size:14.4px">Diabetes with ketoacidosis (E11.10) &lt;HCC17&gt;</div>
<svg style="left:11px;top:163.1px" width="9" height="12" viewBox="0 0 9 12"><path d="M1.5 1l5 5-5 5" stroke="#777" stroke-width="1.4" fill="none"/></svg>
<svg style="left:29.0px;top:159.1px" width="22" height="22" viewBox="0 0 22 22"><circle cx="10" cy="10" r="8.2" stroke="#6f6f6f" stroke-width="1.7" fill="none"/><path d="M10 6.5v5M7 9h5" stroke="#555" stroke-width="1.8"/><circle cx="14.3" cy="13.4" r="6.7" fill="#1d92dd"/><path d="M11.9 10.3v6.2M16.7 10.3v6.2M11.9 13.4h4.8" stroke="#fff" stroke-width="1.9"/></svg>
<div class="row" style="left:55.5px;top:162.1px;font-size:14.4px">Diabetes with retinopathy (E11.319) &lt;HCC18&gt;</div>
<svg style="left:29.0px;top:181.5px" width="22" height="22" viewBox="0 0 22 22"><path d="M2.5 10l6-6.2v3.6h5.5v5.2H8.5v3.6z" stroke="#8a8a8a" stroke-width="1.2" fill="#fff"/><circle cx="14.3" cy="13.4" r="6.7" fill="#1d92dd"/><path d="M11.9 10.3v6.2M16.7 10.3v6.2M11.9 13.4h4.8" stroke="#fff" stroke-width="1.9"/></svg>
<div class="row" style="left:55.5px;top:184.5px;font-size:14.4px">Diabetes, coma, hyperosmolar (E11.01) &lt;HCC17&gt;</div>
<svg style="left:11px;top:208.0px" width="9" height="12" viewBox="0 0 9 12"><path d="M1.5 1l5 5-5 5" stroke="#777" stroke-width="1.4" fill="none"/></svg>
<svg style="left:29.0px;top:204.0px" width="22" height="22" viewBox="0 0 22 22"><circle cx="10" cy="10" r="8.2" stroke="#6f6f6f" stroke-width="1.7" fill="none"/><path d="M10 6v8M6 10h8" stroke="#555" stroke-width="2"/></svg>
<div class="row" style="left:55.5px;top:207.0px;font-size:14.4px">Diabetes in undelivered pregnancy (O24.919)</div>
<svg style="left:29.0px;top:226.4px" width="22" height="22" viewBox="0 0 22 22"><path d="M2.5 10l6-6.2v3.6h5.5v5.2H8.5v3.6z" stroke="#8a8a8a" stroke-width="1.2" fill="#fff"/><circle cx="14.3" cy="13.4" r="6.7" fill="#1d92dd"/><path d="M11.9 10.3v6.2M16.7 10.3v6.2M11.9 13.4h4.8" stroke="#fff" stroke-width="1.9"/></svg>
<div class="row" style="left:55.5px;top:229.4px;font-size:14.4px">Diabetes insipidus, nephrogenic (N25.1) &lt;HCC23&gt;</div>
<div class="a" style="left:771px;top:0;width:22px;height:233px;background:#f0f0f0"></div>
<svg style="left:775px;top:8px" width="12" height="8" viewBox="0 0 12 8"><path d="M1.5 6.5L6 2l4.5 4.5" stroke="#555" stroke-width="1.8" fill="none"/></svg>
<div class="a" style="left:772px;top:23px;width:18px;height:20px;background:#cdcdcd"></div>
<svg style="left:775px;top:218px" width="12" height="8" viewBox="0 0 12 8"><path d="M1.5 1.5L6 6l4.5-4.5" stroke="#555" stroke-width="1.8" fill="none"/></svg>
</div>
<!-- results right -->
<div class="a" style="left:991px;top:321px;width:393px;height:235px;background:#fff;border:1px solid #8d8f99;overflow:hidden">
<svg style="left:5.0px;top:2.0px" width="22" height="22" viewBox="0 0 22 22"><path d="M1.5 4.5a1 1 0 0 1 1-1h5l2 2h9a1 1 0 0 1 1 1v10a1 1 0 0 1-1 1h-16a1 1 0 0 1-1-1z" stroke="#6a6a6a" stroke-width="1.4" fill="#f4f4f4"/><path d="M1.5 7.5h18" stroke="#6a6a6a" stroke-width="1"/></svg>
<div class="row" style="left:31.799999999999955px;top:5.0px;font-size:14.4px">Previously Documented Related Items</div>
<svg style="left:28.8px;top:24.4px" width="22" height="22" viewBox="0 0 22 22"><circle cx="10" cy="10" r="8.2" stroke="#6f6f6f" stroke-width="1.7" fill="none"/><path d="M10 6.5v5M7 9h5" stroke="#555" stroke-width="1.8"/><circle cx="14.3" cy="13.4" r="6.7" fill="#1d92dd"/><path d="M11.9 10.3v6.2M16.7 10.3v6.2M11.9 13.4h4.8" stroke="#fff" stroke-width="1.9"/></svg>
<div class="row" style="left:55.700000000000045px;top:27.5px;font-size:14.4px;">Diabetes (E11.9) &lt;HCC19&gt;</div>
<svg style="left:28.8px;top:46.9px" width="22" height="22" viewBox="0 0 22 22"><path d="M2.5 10l6.5-6.8v4h6.5v5.6H9v4z" stroke="#8a8a8a" stroke-width="1.3" fill="#fff"/></svg>
<div class="row" style="left:55.700000000000045px;top:49.9px;font-size:14.4px;">Gestational diabetes mellitus (GDM) requiring insulin</div>
<svg style="left:28.8px;top:69.3px" width="22" height="22" viewBox="0 0 22 22"><path d="M2.5 10l6-6.2v3.6h5.5v5.2H8.5v3.6z" stroke="#8a8a8a" stroke-width="1.2" fill="#fff"/><circle cx="14.3" cy="13.4" r="6.7" fill="#1d92dd"/><path d="M11.9 10.3v6.2M16.7 10.3v6.2M11.9 13.4h4.8" stroke="#fff" stroke-width="1.9"/></svg>
<div class="row" style="left:55.700000000000045px;top:72.3px;font-size:14.4px;">Acquired neurogenic diabetes insipidus (E23.2)</div>
<svg style="left:28.8px;top:91.8px" width="22" height="22" viewBox="0 0 22 22"><circle cx="10" cy="10" r="8.2" stroke="#6f6f6f" stroke-width="1.7" fill="none"/><path d="M10 6v8M6 10h8" stroke="#555" stroke-width="2"/></svg>
<div class="row" style="left:55.700000000000045px;top:94.8px;font-size:14.4px;">Pregnancy diabetes (O24.919)</div>
<svg style="left:28.8px;top:114.2px" width="22" height="22" viewBox="0 0 22 22"><path d="M2.5 10l6-6.2v3.6h5.5v5.2H8.5v3.6z" stroke="#8a8a8a" stroke-width="1.2" fill="#fff"/><circle cx="14.3" cy="13.4" r="6.7" fill="#1d92dd"/><path d="M11.9 10.3v6.2M16.7 10.3v6.2M11.9 13.4h4.8" stroke="#fff" stroke-width="1.9"/></svg>
<div class="row" style="left:55.700000000000045px;top:117.2px;font-size:14.4px;">Sclerosis, dorsal, diabetic (E11.49, G35) &lt;HCC18&gt;</div>
<svg style="left:28.8px;top:136.6px" width="22" height="22" viewBox="0 0 22 22"><circle cx="10" cy="10" r="8.2" stroke="#6f6f6f" stroke-width="1.7" fill="none"/><path d="M10 6v8M6 10h8" stroke="#555" stroke-width="2"/></svg>
<div class="row" style="left:55.700000000000045px;top:139.7px;font-size:14.4px;">Diabetes in undelivered pregnancy (O24.919)</div>
<svg style="left:28.8px;top:159.1px" width="22" height="22" viewBox="0 0 22 22"><circle cx="10" cy="10" r="8.2" stroke="#6f6f6f" stroke-width="1.7" fill="none"/><path d="M10 6.5v5M7 9h5" stroke="#555" stroke-width="1.8"/><circle cx="14.3" cy="13.4" r="6.7" fill="#1d92dd"/><path d="M11.9 10.3v6.2M16.7 10.3v6.2M11.9 13.4h4.8" stroke="#fff" stroke-width="1.9"/></svg>
<div class="row" style="left:55.700000000000045px;top:162.1px;font-size:14.4px;">Diabetes mellitus with both eyes affected by proliferative</div>
<svg style="left:28.8px;top:181.5px" width="22" height="22" viewBox="0 0 22 22"><path d="M2.5 10l6.5-6.8v4h6.5v5.6H9v4z" stroke="#8a8a8a" stroke-width="1.3" fill="#fff"/></svg>
<div class="row" style="left:55.700000000000045px;top:184.5px;font-size:14.4px;font-style:italic">Autoimmune diabetes</div>
<svg style="left:28.8px;top:204.0px" width="22" height="22" viewBox="0 0 22 22"><path d="M2.5 10l6-6.2v3.6h5.5v5.2H8.5v3.6z" stroke="#8a8a8a" stroke-width="1.2" fill="#fff"/><circle cx="14.3" cy="13.4" r="6.7" fill="#1d92dd"/><path d="M11.9 10.3v6.2M16.7 10.3v6.2M11.9 13.4h4.8" stroke="#fff" stroke-width="1.9"/></svg>
<div class="row" style="left:55.700000000000045px;top:207.0px;font-size:14.4px;">Ascending diabetic disease (E11.69) &lt;HCC18&gt;</div>
<div class="a" style="left:369px;top:0;width:22px;height:212px;background:#f0f0f0"></div>
<svg style="left:374px;top:8px" width="12" height="8" viewBox="0 0 12 8"><path d="M1.5 6.5L6 2l4.5 4.5" stroke="#555" stroke-width="1.8" fill="none"/></svg>
<div class="a" style="left:370.5px;top:23px;width:18px;height:88px;background:#cdcdcd"></div>
<svg style="left:374px;top:196px" width="12" height="8" viewBox="0 0 12 8"><path d="M1.5 1.5L6 6l4.5-4.5" stroke="#555" stroke-width="1.8" fill="none"/></svg>
<div class="a" style="left:0;top:211px;width:391px;height:21px;background:#f0f0f0"></div>
<svg style="left:8px;top:216px" width="8" height="12" viewBox="0 0 8 12"><path d="M6.5 1.5L2 6l4.5 4.5" stroke="#555" stroke-width="1.8" fill="none"/></svg>
<div class="a" style="left:23px;top:212.5px;width:84px;height:18px;background:#cdcdcd"></div>
<svg style="left:354px;top:216px" width="8" height="12" viewBox="0 0 8 12"><path d="M1.5 1.5L6 6l-4.5 4.5" stroke="#555" stroke-width="1.8" fill="none"/></svg>
</div>
<div class="a" style="left:184px;top:562px;width:1236px;height:1px;background:#8c8c8c"></div>
<div class="a" style="left:184px;top:563px;width:1236px;height:377px;background:#e6e6e6"></div>

<!-- bottom: current plans / future plans -->
<div class="a" style="left:183px;top:563px;width:1px;height:377px;background:#9a9a9a"></div>
<div class="a" style="left:184px;top:563px;width:1236px;height:24px;background:linear-gradient(#e4e4e4,#ececec)"></div>
<div class="t" style="left:192px;top:570.5px;font-size:13px;color:#111">Current Plans</div>
<div class="t" style="left:1113px;top:570.3px;font-size:13px;color:#111">Future Plans</div>
<div class="a" style="left:185px;top:587.5px;width:911px;height:27.5px;background:linear-gradient(#d2d2d2,#e9e9e9 50%,#f5f5f5)"></div>
<div class="a" style="left:1106px;top:587.5px;width:312px;height:27.5px;background:linear-gradient(#d2d2d2,#e9e9e9 50%,#f5f5f5)"></div>
<div class="a" style="left:1097px;top:587px;width:1px;height:353px;background:#d0d0d0"></div>
<div class="a" style="left:1104px;top:587px;width:1px;height:353px;background:#d0d0d0"></div>
<!-- current plans toolbar -->
<svg style="left:192px;top:595px" width="16" height="16" viewBox="0 0 16 16"><path d="M2.5 2.5l11 11M13.5 2.5l-11 11" stroke="#f48a9c" stroke-width="3.2" stroke-linecap="round"/><path d="M2.5 2.5l11 11M13.5 2.5l-11 11" stroke="#fbc4cd" stroke-width="1"/></svg>
<svg style="left:220px;top:592px" width="21" height="21" viewBox="0 0 21 21"><path d="M15 2l4 4L6 19l-4 1 1-4z" fill="#f6c9a4" stroke="#eeb38a" stroke-width="0.8"/><path d="M15 2l4 4-1.5 1.5-4-4z" fill="#e8e8e8"/><path d="M2 20l1-4 3 3z" fill="#a0a0a0"/></svg>
<div class="tb" style="left:250.4px;top:595px;color:#9a9a9a">Update</div>
<div class="a" style="left:304px;top:590.5px;width:1px;height:22px;background:#7c7c7c"></div>
<svg style="left:319px;top:595px" width="15" height="15" viewBox="0 0 15 15"><rect x="0.5" y="0" width="13" height="2.2" fill="#a5daf2"/><path d="M7 2.8l6 6H9.8V15H4.2V8.8H1z" fill="#a5daf2"/><path d="M7 5l3 3H8.5v5.5h-3V8H4z" fill="#d8f0fa"/></svg>
<svg style="left:349px;top:596px" width="15" height="13" viewBox="0 0 15 13"><path d="M7 0l6.5 6.5H10V13H4V6.5H.5z" fill="#a5daf2"/><path d="M7 2.5l3.5 3.5H8.8v5.5H5.2V6H3.5z" fill="#d8f0fa"/></svg>
<svg style="left:379px;top:596px" width="15" height="13" viewBox="0 0 15 13"><path d="M7 13l6.5-6.5H10V0H4v6.5H.5z" fill="#a5daf2"/><path d="M7 10.5l3.5-3.5H8.8V1.5H5.2V7H3.5z" fill="#d8f0fa"/></svg>
<svg style="left:408px;top:595px" width="15" height="15" viewBox="0 0 15 15"><rect x="0.5" y="12.8" width="13" height="2.2" fill="#a5daf2"/><path d="M7 12.2l6-6H9.8V0H4.2v6.2H1z" fill="#a5daf2"/><path d="M7 10l3-3H8.5V1.5h-3V7H4z" fill="#d8f0fa"/></svg>
<div class="tb" style="left:436.5px;top:594.5px">Move</div>
<div class="a" style="left:479px;top:590.5px;width:1px;height:22px;background:#7c7c7c"></div>
<div class="tb" style="left:492px;top:594.5px">Note</div>
<div class="a" style="left:531px;top:590.5px;width:1px;height:22px;background:#7c7c7c"></div>
<div class="tb" style="left:543px;top:594.5px">Clear</div>
<div class="a" style="left:586px;top:590.5px;width:1px;height:22px;background:#7c7c7c"></div>
<div class="tb" style="left:598px;top:594.5px">Draft</div>
<div class="a" style="left:639px;top:590.5px;width:1px;height:22px;background:#7c7c7c"></div>
<svg style="left:655px;top:595px" width="14" height="13" viewBox="0 0 14 13"><path d="M7 0.5l6.5 12H.5z" fill="#e8194b" stroke="#e8194b" stroke-linejoin="round" stroke-width="1"/><rect x="6.1" y="4" width="1.8" height="4.5" fill="#fff"/><rect x="6.1" y="9.5" width="1.8" height="1.8" fill="#fff"/></svg>
<div class="tb" style="left:674.7px;top:594.5px">Drug</div>
<svg style="left:723px;top:595px" width="14" height="13" viewBox="0 0 14 13"><path d="M7 0.5l6.5 12H.5z" fill="#f28b1e" stroke="#f28b1e" stroke-linejoin="round" stroke-width="1"/><rect x="6.1" y="4" width="1.8" height="4.5" fill="#111"/><rect x="6.1" y="9.5" width="1.8" height="1.8" fill="#111"/></svg>
<div class="tb" style="left:742.4px;top:594.5px">ABN</div>
<div class="a" style="left:783px;top:590.5px;width:1px;height:22px;background:#7c7c7c"></div>
<svg style="left:795px;top:593px" width="20" height="20" viewBox="0 0 20 20"><circle cx="10" cy="10" r="10" fill="#a3d9f0"/><circle cx="11" cy="5" r="1.5" fill="#fff"/><path d="M10 8.5l-1.5 8" stroke="#fff" stroke-width="2.4" stroke-linecap="round"/></svg>
<svg style="left:825px;top:593px" width="20" height="20" viewBox="0 0 20 20"><circle cx="10" cy="10" r="10" fill="#cdcdcd"/><path d="M10 10L6 3.3a7.8 7.8 0 0 1 8 0zM10 10l7.8 0a7.8 7.8 0 0 1-4 6.8zM10 10l-3.8 6.8a7.8 7.8 0 0 1-4-6.8z" fill="#f2b88e"/><circle cx="10" cy="10" r="1.6" fill="#f2b88e"/></svg>
<svg style="left:856px;top:594px" width="19" height="17" viewBox="0 0 19 17"><rect x="1" y="5" width="13" height="11" fill="#f4f4f4" stroke="#555" stroke-width="1.2"/><path d="M9 5V1h4" stroke="#555" stroke-width="1.2" fill="none"/><circle cx="5" cy="9" r="1.5" fill="#3b8fd6"/><rect x="8" y="8" width="2" height="2" fill="#e05050"/><rect x="4" y="12" width="2" height="2" fill="#3aa55a"/><path d="M14 9l4 3-4 3z" fill="#3aa55a"/></svg>
<div class="tb" style="left:885px;top:594.5px">Isabel</div>
<div class="a" style="left:932px;top:590.5px;width:1px;height:22px;background:#7c7c7c"></div>
<div class="tb" style="left:944px;top:594.5px;letter-spacing:0.42px">Scan Vaccine Barcode</div>
<!-- future plans toolbar -->
<svg style="left:1113px;top:595px" width="16" height="16" viewBox="0 0 16 16"><path d="M5.5 0.8h5v4.7h4.7v5h-4.7v4.7h-5v-4.7H.8v-5h4.7z" fill="#4cbf4c" stroke="#2fa12f" stroke-width="1"/><path d="M8 3v10M3 8h10" stroke="#b8ecb0" stroke-width="1"/></svg>
<svg style="left:1143px;top:595px" width="16" height="16" viewBox="0 0 16 16"><path d="M2.5 2.5l11 11M13.5 2.5l-11 11" stroke="#f48a9c" stroke-width="3.2" stroke-linecap="round"/><path d="M2.5 2.5l11 11M13.5 2.5l-11 11" stroke="#fbc4cd" stroke-width="1"/></svg>
<svg style="left:1171px;top:592px" width="21" height="21" viewBox="0 0 21 21"><path d="M15 2l4 4L6 19l-4 1 1-4z" fill="#f6c9a4" stroke="#eeb38a" stroke-width="0.8"/><path d="M15 2l4 4-1.5 1.5-4-4z" fill="#e8e8e8"/><path d="M2 20l1-4 3 3z" fill="#a0a0a0"/></svg>
<div class="a" style="left:1199px;top:590.5px;width:1px;height:22px;background:#7c7c7c"></div>
<div class="tb" style="left:1211px;top:595px;color:#9a9a9a">Include</div>
<!-- lists -->
<div class="a" style="left:185px;top:615px;width:911px;height:261px;background:#fff;border:1px solid #a0a0a0;border-right:2px solid #9a9aa4;border-bottom:none"></div>
<div class="a" style="left:212.5px;top:617.7px;width:207px;height:22px;background:#d9d9d9"></div>
<svg style="left:214px;top:619px" width="22" height="22" viewBox="0 0 22 22"><circle cx="10" cy="10" r="8.2" stroke="#6f6f6f" stroke-width="1.7" fill="none"/><path d="M10 6.5v5M7 9h5" stroke="#555" stroke-width="1.8"/><circle cx="14.3" cy="13.4" r="6.7" fill="#1d92dd"/><path d="M11.9 10.3v6.2M16.7 10.3v6.2M11.9 13.4h4.8" stroke="#fff" stroke-width="1.9"/></svg>
<div class="row" style="left:241.9px;top:621.5px;font-size:14.4px">Diabetes (E11.9) &lt;HCC19&gt;</div>
<div class="a" style="left:1106px;top:615px;width:312px;height:291px;background:#fff;border:1px solid #a0a0a0;border-left:2px solid #9a9aa4;border-bottom:2px solid #a0a0a0"></div>
<!-- practice recommendations -->
<div class="a" style="left:185px;top:875px;width:911px;height:31px;background:#c8e1e4;border:3px solid #137f8b"></div>
<div class="a" style="left:192.2px;top:879.5px;width:21.5px;height:21.5px;border-radius:50%;background:#137f8b"></div>
<div class="t" style="left:198.3px;top:884px;font-size:13px;font-weight:bold;color:#fff">4</div>
<div class="t" style="left:219.4px;top:883.9px;font-size:13.5px;font-weight:bold;color:#000;letter-spacing:0.45px">Practice Recommendations</div>
<div class="t" style="left:422px;top:883.9px;font-size:13.5px;font-weight:bold;color:#1a56d8;letter-spacing:0.35px;text-decoration:underline">Include All</div>
<div class="t" style="left:505px;top:884.3px;font-size:13px;color:#000">|</div>
<div class="t" style="left:519px;top:883.9px;font-size:13.5px;font-weight:bold;color:#1a56d8;letter-spacing:0.7px;text-decoration:underline">Preview</div>
<!-- billing -->
<div class="a" style="left:187.5px;top:910px;width:89px;height:23px;background:#e1e1e1;border:1px solid #c4c4c4"></div>
<div class="t" style="left:191px;top:914.5px;font-size:13px;color:#111">Billing Level...</div>
<div class="a" style="left:277px;top:908.5px;width:819px;height:27px;background:#e6e6e6;border:1px solid #a4a4a4;box-shadow:inset 1px 1px 0 #fff"></div>
<div class="t" style="left:284px;top:914.5px;font-size:13px;color:#111">(SITE DEFAULT)</div>
<div class="a" style="left:1106px;top:908.5px;width:312px;height:27px;background:#e6e6e6;border:1px solid #a4a4a4;box-shadow:inset 1px 1px 0 #fff"></div>
<div class="a" style="left:184px;top:938px;width:1236px;height:2px;background:#9a9a9a"></div>

<!-- right sidebar -->
<svg style="left:1434px;top:82px" width="16" height="16" viewBox="0 0 16 16"><path d="M1.5 1.5L8 8l-6.5 6.5M7.5 1.5L14 8l-6.5 6.5" fill="none" stroke="#e8e8e8" stroke-width="1.8"/></svg>
<div class="t" style="left:1432px;top:108.9px;font-size:14.3px;color:#ebebeb;transform:scaleX(0.88);transform-origin:0 0">INBOXES</div>
<svg style="left:1432px;top:136.2px" width="22" height="22" viewBox="0 0 22 22"><rect x="1" y="3" width="19" height="17" rx="1.5" fill="none" stroke="#ebebeb" stroke-width="1.6"/><rect x="1" y="3" width="19" height="3" fill="#ebebeb"/><rect x="4" y="1" width="1.6" height="3" fill="#ebebeb"/><rect x="15.4" y="1" width="1.6" height="3" fill="#ebebeb"/><g fill="#ebebeb"><rect x="4" y="8.5" width="2.4" height="2.2"/><rect x="7.8" y="8.5" width="2.4" height="2.2"/><rect x="11.6" y="8.5" width="2.4" height="2.2"/><rect x="15.2" y="8.5" width="2.2" height="2.2"/><rect x="4" y="12" width="2.4" height="2.2"/><rect x="7.8" y="12" width="2.4" height="2.2"/><rect x="11.6" y="12" width="2.4" height="2.2"/><rect x="15.2" y="12" width="2.2" height="2.2"/><rect x="4" y="15.5" width="2.4" height="2.2"/><rect x="7.8" y="15.5" width="2.4" height="2.2"/><rect x="11.6" y="15.5" width="2.4" height="2.2"/><rect x="15.2" y="15.5" width="2.2" height="2.2"/></g></svg>
<div class="ri" style="top:140.3px;font-size:14.4px;letter-spacing:0.1px">Appointments</div>
<svg style="left:1428px;top:184.1px" width="30" height="30" viewBox="0 0 30 30"><path d="M3 0h24l3 3v24l-3 3H3l-3-3V3z" fill="#d01418"/><path d="M6.5 9v12.5h12" fill="none" stroke="#f4f4f4" stroke-width="1"/><path d="M8 7h4l1 1h10v13H8z" fill="#f4f4f4"/><circle cx="15.5" cy="12.5" r="2" fill="#d01418"/><rect x="11.5" y="16" width="10" height="2" rx="1" fill="#d01418"/></svg>
<div class="ri" style="top:192.7px;font-size:14.4px;letter-spacing:0.1px">Open Encounters</div>
<div class="bd" style="left:1425.5px;top:214.8px;width:35px;height:17.5px;line-height:17.5px;font-size:14px">44</div>
<div class="bdr" style="left:1470.5px;top:214.8px;width:34.5px;height:17.5px;line-height:17.5px;font-size:14px">39</div>
<svg style="left:1428px;top:236.5px" width="30" height="30" viewBox="0 0 30 30"><path d="M3 0h24l3 3v24l-3 3H3l-3-3V3z" fill="#d01418"/><rect x="5" y="11" width="14" height="12" fill="none" stroke="#f4f4f4" stroke-width="1.3"/><path d="M6.5 20l3-4 2 2 3-5 2 3" fill="none" stroke="#f4f4f4" stroke-width="1.3"/><path d="M15 5h7M16.5 5v5l-3.5 6.5c-.5 1 0 1.5 1 1.5h9c1 0 1.5-.5 1-1.5L20.5 10V5" fill="none" stroke="#f4f4f4" stroke-width="1.3"/></svg>
<div class="ri" style="top:245.2px;font-size:14.4px;letter-spacing:0.1px">Result Notifications</div>
<div class="bd" style="left:1425.5px;top:267.2px;width:35px;height:17.5px;line-height:17.5px;font-size:14px">18</div>
<div class="bdr" style="left:1470.5px;top:267.2px;width:34.5px;height:17.5px;line-height:17.5px;font-size:14px">6</div>
<svg style="left:1432px;top:293.5px" width="22" height="22" viewBox="0 0 22 22"><rect x="1" y="4.5" width="20" height="14" rx="1" fill="#ebebeb"/><path d="M1.5 5.5l9.5 7.5 9.5-7.5" stroke="#434343" stroke-width="1.6" fill="none"/></svg>
<div class="ri" style="top:297.6px;font-size:14.4px;letter-spacing:0.1px">Messages</div>
<div class="bd" style="left:1425.5px;top:319.7px;width:35px;height:17.5px;line-height:17.5px;font-size:14px">5</div>
<svg style="left:1432px;top:345.9px" width="22" height="22" viewBox="0 0 22 22"><circle cx="11" cy="11" r="9.2" fill="none" stroke="#ebebeb" stroke-width="1.6"/><ellipse cx="11" cy="11" rx="4" ry="9.2" fill="none" stroke="#ebebeb" stroke-width="1.2"/><path d="M11 2v18M2 11h18M3.5 6.5h15M3.5 15.5h15" stroke="#ebebeb" stroke-width="1.2"/></svg>
<div class="ri" style="top:350.0px;font-size:14.4px;letter-spacing:0.1px">Web Messages</div>
<svg style="left:1432px;top:398.3px" width="22" height="22" viewBox="0 0 22 22"><rect x="2.5" y="1" width="16" height="2.6" fill="#ebebeb"/><rect x="3.8" y="3.6" width="13.5" height="17" rx="1" fill="none" stroke="#ebebeb" stroke-width="1.4"/><text x="6" y="14" font-size="11" font-family="Liberation Sans" fill="#ebebeb">R</text><text x="11.5" y="18.5" font-size="8" font-family="Liberation Sans" fill="#ebebeb">x</text></svg>
<div class="ri" style="top:402.4px;font-size:14.4px;letter-spacing:0.1px">Refill Requests</div>
<div class="bd" style="left:1425.5px;top:424.5px;width:35px;height:17.5px;line-height:17.5px;font-size:14px">5</div>
<svg style="left:1432px;top:450.7px" width="22" height="22" viewBox="0 0 22 22"><rect x="4.5" y="1" width="15" height="2.6" fill="#ebebeb"/><rect x="5.8" y="3.6" width="12.5" height="17" rx="1" fill="none" stroke="#ebebeb" stroke-width="1.4"/><text x="0" y="14" font-size="7" font-family="Liberation Sans" fill="#ebebeb">e</text><text x="7" y="14" font-size="11" font-family="Liberation Sans" fill="#ebebeb">R</text><text x="12.5" y="18.5" font-size="8" font-family="Liberation Sans" fill="#ebebeb">x</text></svg>
<div class="ri" style="top:454.8px;font-size:14.4px;letter-spacing:0.1px">eRx Requests</div>
<div class="bd" style="left:1425.5px;top:476.9px;width:35px;height:17.5px;line-height:17.5px;font-size:14px">1</div>
<svg style="left:1432px;top:503.1px" width="22" height="22" viewBox="0 0 22 22"><path d="M7.5 1.5h9.5a1.5 1.5 0 0 1 1.5 1.5v16a1.5 1.5 0 0 1-1.5 1.5H5a1.5 1.5 0 0 1-1.5-1.5V5.5z" fill="#ebebeb"/><path d="M7 9h8.5M7 12.5h8.5M7 16h8.5" stroke="#434343" stroke-width="1.3"/><path d="M7.5 1.5v4h-4" fill="none" stroke="#434343" stroke-width="1"/></svg>
<div class="ri" style="top:507.3px;font-size:14.4px;letter-spacing:0.1px">Document Review</div>
<div class="bd" style="left:1425.5px;top:529.3px;width:35px;height:17.5px;line-height:17.5px;font-size:14px">2</div>
<svg style="left:1432px;top:555.6px" width="22" height="22" viewBox="0 0 22 22"><path d="M15 10v9.5H2V5h11" fill="none" stroke="#ebebeb" stroke-width="1.6"/><path d="M5 10l4.5 4.5L20 3" stroke="#ebebeb" stroke-width="3" fill="none"/></svg>
<div class="ri" style="top:559.7px;font-size:14.4px;letter-spacing:0.1px">Action Items</div>
<div class="bd" style="left:1425.5px;top:581.8px;width:35px;height:17.5px;line-height:17.5px;font-size:14px">4</div>
<svg style="left:1432px;top:608.0px" width="22" height="22" viewBox="0 0 22 22"><rect x="5" y="3.5" width="14" height="15" rx="1" fill="none" stroke="#ebebeb" stroke-width="1.6"/><rect x="9.5" y="1.5" width="5" height="3" fill="#ebebeb"/><path d="M8 8.5h8M8 11.5h8M8 14.5h8" stroke="#ebebeb" stroke-width="1.3"/><path d="M2.5 6v14.5h13" fill="none" stroke="#ebebeb" stroke-width="1.3"/></svg>
<div class="ri" style="top:612.1px;font-size:14.4px;letter-spacing:0.1px">Received Charts</div>
<div class="bd" style="left:1425.5px;top:634.2px;width:35px;height:17.5px;line-height:17.5px;font-size:14px">2</div>
<svg style="left:1432px;top:660.4px" width="22" height="22" viewBox="0 0 22 22"><path d="M10 3.5A8.5 8.5 0 1 0 18.5 12H10z" fill="#ebebeb"/><path d="M12 1.5a8.5 8.5 0 0 1 8.5 8.5H12z" fill="#ebebeb"/></svg>
<div class="ri" style="top:664.5px;font-size:14.4px;letter-spacing:0.1px">Report Results</div>
<div class="bd" style="left:1425.5px;top:686.6px;width:35px;height:17.5px;line-height:17.5px;font-size:14px">3</div>
<svg style="left:1432px;top:712.8px" width="22" height="22" viewBox="0 0 22 22"><rect x="3.5" y="1.5" width="15" height="19" rx="1.5" fill="none" stroke="#ebebeb" stroke-width="1.5"/><circle cx="9" cy="6.5" r="1.8" fill="#ebebeb"/><rect x="6.5" y="9" width="5" height="3" fill="#ebebeb"/><rect x="6.5" y="13.5" width="9" height="1.3" fill="#ebebeb"/><rect x="6.5" y="16" width="9" height="1.3" fill="#ebebeb"/><rect x="13" y="9.5" width="2.5" height="1.2" fill="#ebebeb"/></svg>
<div class="ri" style="top:716.9px;font-size:14.4px;letter-spacing:0.1px">ePHI Notifications</div>
<svg style="left:1432px;top:765.2px" width="22" height="22" viewBox="0 0 22 22"><rect x="0.8" y="3.5" width="20" height="15" fill="none" stroke="#ebebeb" stroke-width="1.3"/><text x="2" y="16" font-size="12" font-family="Liberation Sans" fill="#ebebeb" textLength="17">PA</text></svg>
<div class="ri" style="top:769.4px;font-size:14.4px;letter-spacing:0.1px">eAuth Notifications</div>
<div class="a" style="left:1426px;top:917px;width:174px;height:23px;background:#e6e6e6"></div>

<!-- sidebar bottom toolbars -->
<div class="a" style="left:34px;top:918px;width:1px;height:22px;background:#f6f9fc"></div>
<div class="a" style="left:65px;top:918px;width:1px;height:22px;background:#f6f9fc"></div>
<div class="a" style="left:121px;top:918px;width:1px;height:22px;background:#f6f9fc"></div>
<svg style="left:11px;top:921px" width="16" height="16" viewBox="0 0 16 16"><path d="M14.5 4.5a4 4 0 0 1-5.5 3.6L3 14a1.4 1.4 0 0 1-2-2l5.9-6A4 4 0 0 1 11.5 1l-2.3 2.3.6 2.3 2.3.6z" fill="#555"/></svg>
<svg style="left:42px;top:921px" width="16" height="16" viewBox="0 0 16 16"><path d="M1 5V1h4M11 1h4v4M15 11v4h-4M5 15H1v-4" fill="none" stroke="#ababab" stroke-width="1.8"/><path d="M8 5v6M5 8h6" stroke="#ababab" stroke-width="1.6"/></svg>
<svg style="left:86px;top:924px" width="13" height="8" viewBox="0 0 13 8"><path d="M1 7l5.5-5.5L12 7" fill="none" stroke="#ababab" stroke-width="1.8"/></svg>
<svg style="left:144px;top:924px" width="13" height="8" viewBox="0 0 13 8"><path d="M1 1l5.5 5.5L12 1" fill="none" stroke="#ababab" stroke-width="1.8"/></svg>
<div class="a" style="left:1480px;top:918px;width:1px;height:22px;background:#f6f9fc"></div>
<div class="a" style="left:1537px;top:918px;width:1px;height:22px;background:#f6f9fc"></div>
<div class="a" style="left:1568px;top:918px;width:1px;height:22px;background:#f6f9fc"></div>
<svg style="left:1446px;top:924px" width="13" height="8" viewBox="0 0 13 8"><path d="M1 1l5.5 5.5L12 1" fill="none" stroke="#ababab" stroke-width="1.8"/></svg>
<svg style="left:1502px;top:924px" width="13" height="8" viewBox="0 0 13 8"><path d="M1 7l5.5-5.5L12 7" fill="none" stroke="#ababab" stroke-width="1.8"/></svg>
<svg style="left:1545px;top:921px" width="16" height="16" viewBox="0 0 16 16"><path d="M1 5V1h4M11 1h4v4M15 11v4h-4M5 15H1v-4" fill="none" stroke="#4a4a4a" stroke-width="1.8"/><path d="M8 5v6M5 8h6" stroke="#4a4a4a" stroke-width="1.6"/></svg>
<svg style="left:1576px;top:921px" width="16" height="16" viewBox="0 0 16 16"><path d="M14.5 4.5a4 4 0 0 1-5.5 3.6L3 14a1.4 1.4 0 0 1-2-2l5.9-6A4 4 0 0 1 11.5 1l-2.3 2.3.6 2.3 2.3.6z" fill="#555"/></svg>
<div class="a" style="left:1px;top:2px;width:2px;height:938px;background:#0a0a0a"></div>
<div class="a" style="left:1600px;top:2px;width:1px;height:938px;background:#8a8a8a"></div>
<div class="a" style="left:1601px;top:0;width:1px;height:940px;background:#fff"></div>
<div class="a" style="left:3px;top:2px;width:1597px;height:1px;background:#ececec"></div>

</body></html>
